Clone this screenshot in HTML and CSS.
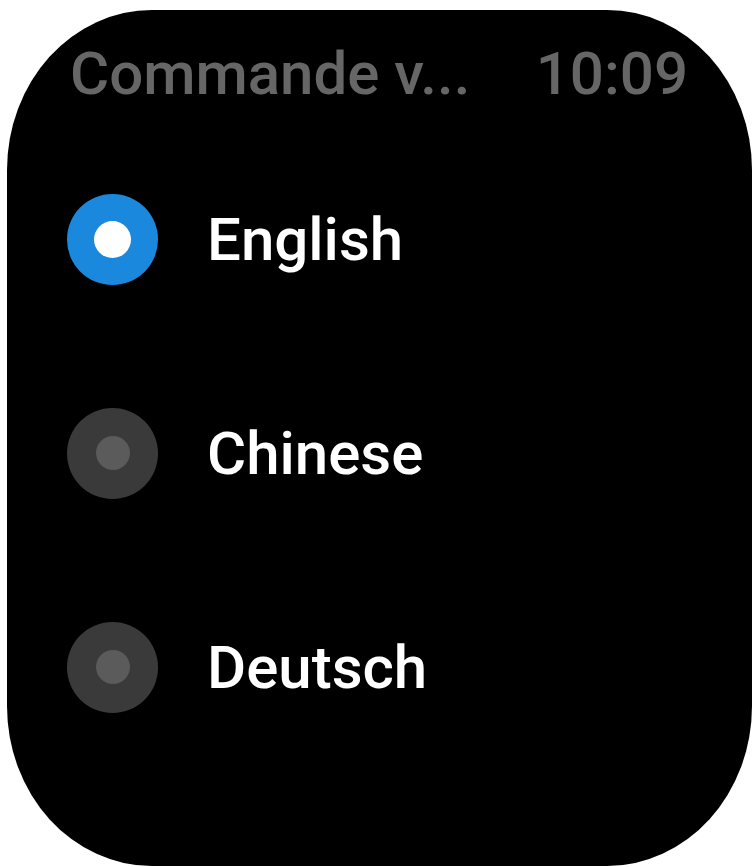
FILE: index.html
```html
<!DOCTYPE html>
<html>
<head>
<meta charset="utf-8">
<link rel="stylesheet" href="styles.css">
</head>
<body>
<div class="watch">
  <div class="header">
    <span class="title">Commande v...</span>
    <span class="time">10:09</span>
  </div>
  <div class="list">
    <div class="row">
      <span class="radio on"><span class="dot"></span></span>
      <span class="label">English</span>
    </div>
    <div class="row">
      <span class="radio"><span class="dot"></span></span>
      <span class="label">Chinese</span>
    </div>
    <div class="row">
      <span class="radio"><span class="dot"></span></span>
      <span class="label">Deutsch</span>
    </div>
  </div>
</div>
</body>
</html>
```

FILE: styles.css
```css
html, body {
  margin: 0;
  padding: 0;
  background: #ffffff;
}
body {
  font-family: Roboto, "Noto Sans", "Liberation Sans", sans-serif;
}
.watch {
  margin: 10px 4px 0 7px;
  width: 745px;
  height: 856px;
  background: #000;
  border-radius: 145px / 160px;
  box-sizing: border-box;
  padding-top: 29px;
  overflow: hidden;
}
.header {
  display: flex;
  justify-content: space-between;
  padding: 0 64px 0 63px;
  font-size: 60px;
  line-height: 70px;
  color: #666666;
  font-weight: 500;
}
.list {
  margin-top: 23px;
  display: flex;
  flex-direction: column;
}
.row {
  height: 214px;
  display: flex;
  align-items: center;
  padding-left: 60px;
}
.row:first-child {
  height: 214px;
}
.radio {
  width: 91px;
  height: 91px;
  border-radius: 50%;
  background: #3a3a3a;
  display: flex;
  align-items: center;
  justify-content: center;
  flex: none;
}
.radio .dot {
  width: 34px;
  height: 34px;
  border-radius: 50%;
  background: #5b5b5b;
}
.radio.on {
  background: #1a88dd;
}
.radio.on .dot {
  width: 37px;
  height: 37px;
  background: #ffffff;
}
.label {
  margin-left: 49px;
  color: #ffffff;
  font-size: 60px;
  font-weight: 500;
}
```
